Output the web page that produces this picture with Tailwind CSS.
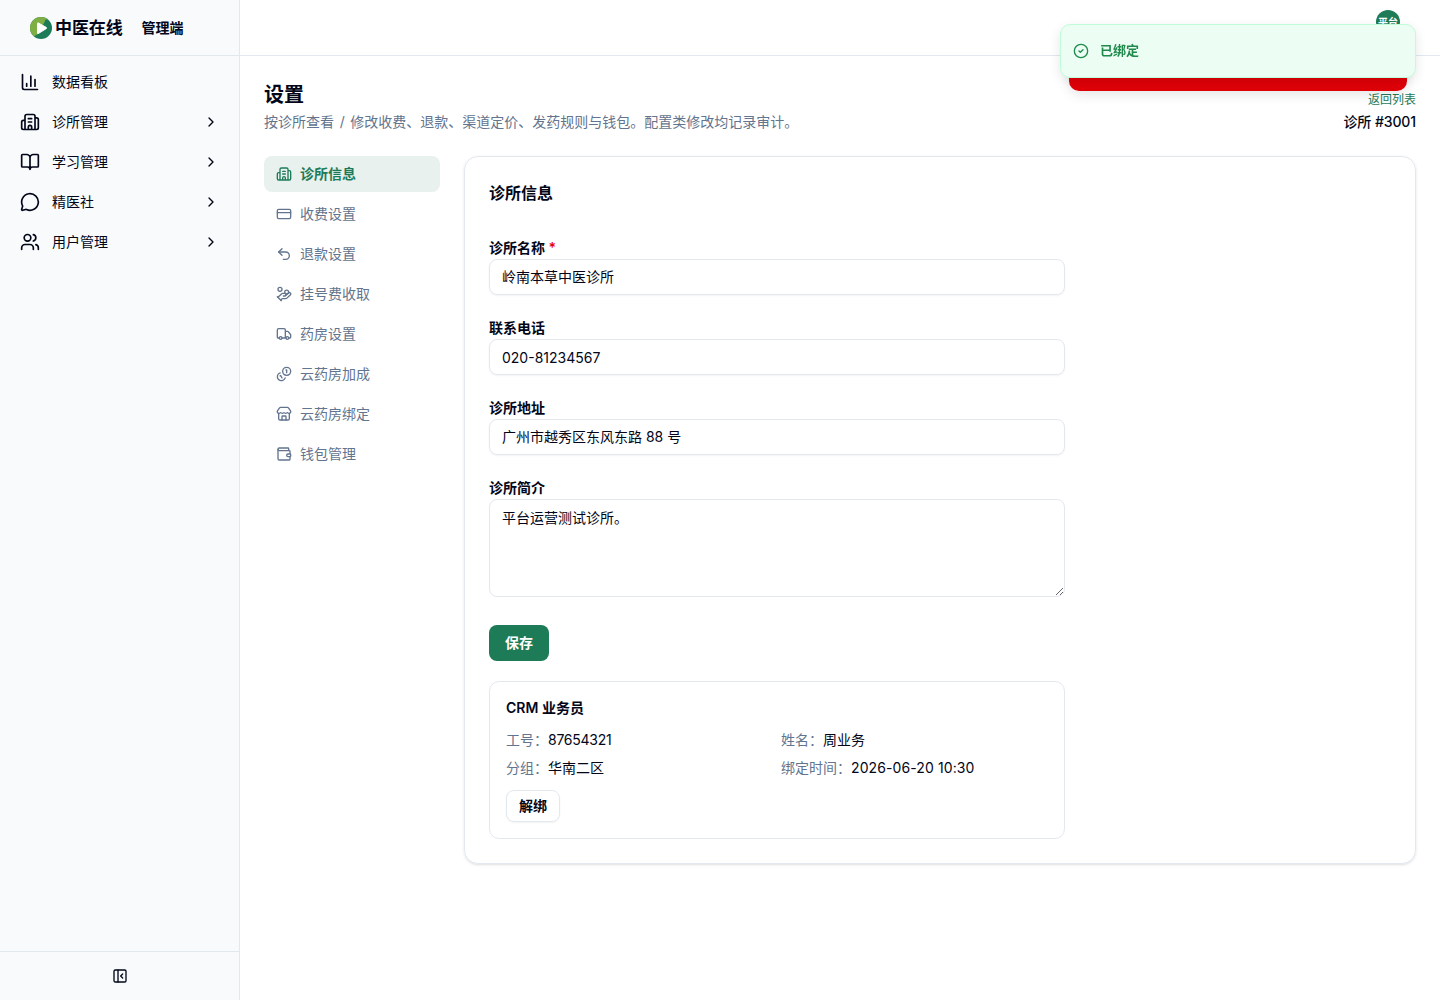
<!DOCTYPE html>
<html lang="zh-CN">
<head>
  <meta charset="UTF-8">
  <title>设置 - 中医在线 管理端</title>
  <script src="https://cdn.jsdelivr.net/npm/@tailwindcss/browser@4"></script>
</head>
<body class="h-screen overflow-hidden flex bg-white text-sm text-[#020618] font-['Inter','Noto_Sans_CJK_SC',sans-serif]">

  <!-- Icon sprite -->
  <svg class="hidden">
    <symbol id="chart" viewBox="0 0 24 24"><path d="M3 3v16a2 2 0 0 0 2 2h16M18 17V9M13 17V5M8 17v-3"/></symbol>
    <symbol id="building" viewBox="0 0 24 24"><path d="M10 12h4M10 8h4M14 21v-3a2 2 0 0 0-4 0v3M6 10H4a2 2 0 0 0-2 2v7a2 2 0 0 0 2 2h16a2 2 0 0 0 2-2V9a2 2 0 0 0-2-2h-2M6 21V5a2 2 0 0 1 2-2h8a2 2 0 0 1 2 2v16"/></symbol>
    <symbol id="book" viewBox="0 0 24 24"><path d="M12 7v14M3 18a1 1 0 0 1-1-1V4a1 1 0 0 1 1-1h5a4 4 0 0 1 4 4 4 4 0 0 1 4-4h5a1 1 0 0 1 1 1v13a1 1 0 0 1-1 1h-6a3 3 0 0 0-3 3 3 3 0 0 0-3-3z"/></symbol>
    <symbol id="message" viewBox="0 0 24 24"><path d="M2.992 16.342a2 2 0 0 1 .094 1.167l-1.065 3.29a1 1 0 0 0 1.236 1.168l3.413-.998a2 2 0 0 1 1.099.092 10 10 0 1 0-4.777-4.719"/></symbol>
    <symbol id="users" viewBox="0 0 24 24"><path d="M16 21v-2a4 4 0 0 0-4-4H6a4 4 0 0 0-4 4v2M16 3.128a4 4 0 0 1 0 7.744M22 21v-2a4 4 0 0 0-3-3.87"/><circle cx="9" cy="7" r="4"/></symbol>
    <symbol id="chevron" viewBox="0 0 24 24"><path d="m9 18 6-6-6-6"/></symbol>
    <symbol id="card" viewBox="0 0 24 24"><rect width="20" height="14" x="2" y="5" rx="2"/><path d="M2 10h20"/></symbol>
    <symbol id="undo" viewBox="0 0 24 24"><path d="M9 14 4 9l5-5"/><path d="M4 9h10.5a5.5 5.5 0 0 1 5.5 5.5 5.5 5.5 0 0 1-5.5 5.5H11"/></symbol>
    <symbol id="hand" viewBox="0 0 24 24"><path d="M11 15h2a2 2 0 1 0 0-4h-3c-.6 0-1.1.2-1.4.6L3 17"/><path d="m7 21 1.6-1.4c.3-.4.8-.6 1.4-.6h4c1.1 0 2.1-.4 2.8-1.2l4.6-4.4a2 2 0 0 0-2.75-2.91l-4.2 3.9"/><path d="m2 16 6 6"/><circle cx="16" cy="9" r="2.9"/><circle cx="6" cy="5" r="3"/></symbol>
    <symbol id="truck" viewBox="0 0 24 24"><path d="M14 18V6a2 2 0 0 0-2-2H4a2 2 0 0 0-2 2v11a1 1 0 0 0 1 1h2M15 18H9M19 18h2a1 1 0 0 0 1-1v-3.65a1 1 0 0 0-.22-.624l-3.48-4.35A1 1 0 0 0 17.52 8H14"/><circle cx="17" cy="18" r="2"/><circle cx="7" cy="18" r="2"/></symbol>
    <symbol id="coins" viewBox="0 0 24 24"><path d="M13.744 17.736a6 6 0 1 1-7.48-7.48M15 6h1v4"/><path d="m6.134 14.768.866-.5 2 3.464"/><circle cx="16" cy="8" r="6"/></symbol>
    <symbol id="store" viewBox="0 0 24 24"><path d="M15 21v-5a1 1 0 0 0-1-1h-4a1 1 0 0 0-1 1v5"/><path d="M17.774 10.31a1.12 1.12 0 0 0-1.549 0 2.5 2.5 0 0 1-3.451 0 1.12 1.12 0 0 0-1.548 0 2.5 2.5 0 0 1-3.452 0 1.12 1.12 0 0 0-1.549 0 2.5 2.5 0 0 1-3.77-3.248l2.889-4.184A2 2 0 0 1 7 2h10a2 2 0 0 1 1.653.873l2.895 4.192a2.5 2.5 0 0 1-3.774 3.244"/><path d="M4 10.95V19a2 2 0 0 0 2 2h12a2 2 0 0 0 2-2v-8.05"/></symbol>
    <symbol id="wallet" viewBox="0 0 24 24"><path d="M19 7V4a1 1 0 0 0-1-1H5a2 2 0 0 0 0 4h15a1 1 0 0 1 1 1v4h-3a2 2 0 0 0 0 4h3a1 1 0 0 0 1-1v-2a1 1 0 0 0-1-1"/><path d="M3 5v14a2 2 0 0 0 2 2h15a1 1 0 0 0 1-1v-4"/></symbol>
    <symbol id="panel" viewBox="0 0 24 24"><rect width="18" height="18" x="3" y="3" rx="2"/><path d="M9 3v18M16 15l-3-3 3-3"/></symbol>
    <symbol id="check" viewBox="0 0 24 24"><circle cx="12" cy="12" r="10"/><path d="m9 12 2 2 4-4"/></symbol>
  </svg>

  <!-- Sidebar -->
  <aside class="w-60 shrink-0 flex flex-col bg-[#f8fafc] border-r border-[#e2e8f0]">
    <div class="h-14 shrink-0 flex items-center pl-[30px] border-b border-[#e2e8f0]">
      <svg class="size-[22px] shrink-0" viewBox="0 0 22 22">
        <clipPath id="disc"><circle cx="11" cy="11" r="11"/></clipPath>
        <g clip-path="url(#disc)">
          <path d="M0 0h22v22H0z" fill="#1e7b58"/>
          <path d="M0 0H18V2.500Q15 1.500 14.500 5L8 17Q6 18 3.500 19.500L0 22Z" fill="#7fae45"/>
        </g>
        <path d="M7.500 6.500v9.500q0 1 .9.500l8-5q.7-.5 0-1l-8-4.500q-.9-.5-.9.500Z" fill="#fff" stroke="#fff"/>
      </svg>
      <span class="ml-[3px] pt-0.5 text-[17px] font-semibold tracking-[-0.1px]">中医在线</span>
      <span class="ml-[19px] font-semibold">管理端</span>
    </div>
    <nav class="flex-1 flex flex-col gap-1 px-2 pt-2">
      <a class="h-9 flex items-center gap-3 px-3">
        <svg class="size-5 fill-none stroke-current stroke-2 [stroke-linecap:round] [stroke-linejoin:round]"><use href="#chart"/></svg>
        <span>数据看板</span>
      </a>
      <a class="h-9 flex items-center gap-3 px-3">
        <svg class="size-5 fill-none stroke-current stroke-2 [stroke-linecap:round] [stroke-linejoin:round]"><use href="#building"/></svg>
        <span class="flex-1">诊所管理</span>
        <svg class="size-4 fill-none stroke-current stroke-2 [stroke-linecap:round] [stroke-linejoin:round]"><use href="#chevron"/></svg>
      </a>
      <a class="h-9 flex items-center gap-3 px-3">
        <svg class="size-5 fill-none stroke-current stroke-2 [stroke-linecap:round] [stroke-linejoin:round]"><use href="#book"/></svg>
        <span class="flex-1">学习管理</span>
        <svg class="size-4 fill-none stroke-current stroke-2 [stroke-linecap:round] [stroke-linejoin:round]"><use href="#chevron"/></svg>
      </a>
      <a class="h-9 flex items-center gap-3 px-3">
        <svg class="size-5 fill-none stroke-current stroke-2 [stroke-linecap:round] [stroke-linejoin:round]"><use href="#message"/></svg>
        <span class="flex-1">精医社</span>
        <svg class="size-4 fill-none stroke-current stroke-2 [stroke-linecap:round] [stroke-linejoin:round]"><use href="#chevron"/></svg>
      </a>
      <a class="h-9 flex items-center gap-3 px-3">
        <svg class="size-5 fill-none stroke-current stroke-2 [stroke-linecap:round] [stroke-linejoin:round]"><use href="#users"/></svg>
        <span class="flex-1">用户管理</span>
        <svg class="size-4 fill-none stroke-current stroke-2 [stroke-linecap:round] [stroke-linejoin:round]"><use href="#chevron"/></svg>
      </a>
    </nav>
    <div class="h-[49px] flex items-center justify-center border-t border-[#e2e8f0]">
      <svg class="size-4 fill-none stroke-current stroke-2 [stroke-linecap:round] [stroke-linejoin:round]"><use href="#panel"/></svg>
    </div>
  </aside>

  <div class="flex-1 min-w-0">
    <header class="h-14 flex justify-end pt-2.5 pr-10 border-b border-[#e2e8f0]">
      <div class="size-6 rounded-full bg-[#1e7b58] text-white text-[10px] font-semibold flex items-center justify-center">平台</div>
    </header>

    <main class="p-6">
      <div class="flex justify-between items-end">
        <div>
          <h1 class="pt-px -mb-px text-xl leading-7 font-semibold">设置</h1>
          <p class="mt-1 text-[#62748e] [word-spacing:1.7px]">按诊所查看 / 修改收费、退款、渠道定价、发药规则与钱包。配置类修改均记录审计。</p>
        </div>
        <div class="text-right">
          <a class="block text-xs text-[#1e7b58]">返回列表</a>
          <p class="mt-1 font-medium tracking-[-0.1px]">诊所 #3001</p>
        </div>
      </div>

      <div class="mt-6 flex items-start gap-6">
        <!-- Settings menu -->
        <nav class="w-44 shrink-0 flex flex-col gap-1 text-[#62748e]">
          <a class="h-9 flex items-center gap-2 px-3 rounded-lg bg-[#e8f1ee] text-[#1e7b58] font-semibold">
            <svg class="size-4 fill-none stroke-current stroke-2 [stroke-linecap:round] [stroke-linejoin:round]"><use href="#building"/></svg>诊所信息
          </a>
          <a class="h-9 flex items-center gap-2 px-3">
            <svg class="size-4 fill-none stroke-current stroke-2 [stroke-linecap:round] [stroke-linejoin:round]"><use href="#card"/></svg>收费设置
          </a>
          <a class="h-9 flex items-center gap-2 px-3">
            <svg class="size-4 fill-none stroke-current stroke-2 [stroke-linecap:round] [stroke-linejoin:round]"><use href="#undo"/></svg>退款设置
          </a>
          <a class="h-9 flex items-center gap-2 px-3">
            <svg class="size-4 fill-none stroke-current stroke-2 [stroke-linecap:round] [stroke-linejoin:round]"><use href="#hand"/></svg>挂号费收取
          </a>
          <a class="h-9 flex items-center gap-2 px-3">
            <svg class="size-4 fill-none stroke-current stroke-2 [stroke-linecap:round] [stroke-linejoin:round]"><use href="#truck"/></svg>药房设置
          </a>
          <a class="h-9 flex items-center gap-2 px-3">
            <svg class="size-4 fill-none stroke-current stroke-2 [stroke-linecap:round] [stroke-linejoin:round]"><use href="#coins"/></svg>云药房加成
          </a>
          <a class="h-9 flex items-center gap-2 px-3">
            <svg class="size-4 fill-none stroke-current stroke-2 [stroke-linecap:round] [stroke-linejoin:round]"><use href="#store"/></svg>云药房绑定
          </a>
          <a class="h-9 flex items-center gap-2 px-3">
            <svg class="size-4 fill-none stroke-current stroke-2 [stroke-linecap:round] [stroke-linejoin:round]"><use href="#wallet"/></svg>钱包管理
          </a>
        </nav>

        <!-- Clinic info -->
        <section class="flex-1 h-[708px] p-6 border border-[#e2e8f0] rounded-[14px] shadow-sm">
          <h2 class="text-base font-semibold">诊所信息</h2>
          <form class="mt-[34px] w-xl">
            <div class="flex flex-col gap-6">
              <div>
                <label class="block h-5 -mt-px mb-px font-semibold">诊所名称 <span class="text-[#e7000b]">*</span></label>
                <input type="text" value="岭南本草中医诊所" class="block w-full h-9 px-3 pb-0.5 border border-[#e2e8f0] rounded-lg shadow-xs">
              </div>
              <div>
                <label class="block h-5 -mt-px mb-px font-semibold">联系电话</label>
                <input type="text" value="020-81234567" class="block w-full h-9 px-3 border border-[#e2e8f0] rounded-lg shadow-xs">
              </div>
              <div>
                <label class="block h-5 -mt-px mb-px font-semibold">诊所地址</label>
                <input type="text" value="广州市越秀区东风东路 88 号" class="block w-full h-9 px-3 pb-0.5 border border-[#e2e8f0] rounded-lg shadow-xs">
              </div>
              <div>
                <label class="block h-5 -mt-px mb-px font-semibold">诊所简介</label>
                <textarea class="block w-full h-[98px] px-3 py-2 border border-[#e2e8f0] rounded-lg">平台运营测试诊所。</textarea>
              </div>
            </div>
            <button type="button" class="mt-7 block h-9 px-4 rounded-lg bg-[#1e7b58] text-white font-semibold">保存</button>
          </form>

          <div class="mt-5 w-xl p-4 border border-[#e2e8f0] rounded-[10px]">
            <h3 class="font-semibold">CRM 业务员</h3>
            <div class="mt-3 grid grid-cols-2 gap-2">
              <div><span class="text-[#62748e]">工号：</span><span class="tracking-[-0.25px]">87654321</span></div>
              <div><span class="text-[#62748e]">姓名：</span>周业务</div>
              <div><span class="text-[#62748e]">分组：</span>华南二区</div>
              <div><span class="text-[#62748e]">绑定时间：</span><span class="tracking-[0.1px]">2026-06-20 10:30</span></div>
            </div>
            <button type="button" class="mt-3 block h-8 px-3 border border-[#e2e8f0] rounded-lg shadow-xs font-semibold">解绑</button>
          </div>
        </section>
      </div>
    </main>
  </div>

  <!-- Toasts -->
  <div class="fixed top-6 right-6 w-[356px]">
    <div class="absolute left-[9px] right-[9px] top-5 h-[47px] rounded-[10px] bg-[#e00008] shadow-[0_4px_12px_rgba(0,0,0,0.1)]"></div>
    <div class="relative h-[54px] flex items-center gap-[11px] px-3 rounded-[10px] border border-[#bffcd9] bg-[#ecfdf3] text-[#208a4d] text-[13px] font-semibold shadow-[0_4px_12px_rgba(0,0,0,0.1)]">
      <svg class="size-4 fill-none stroke-current stroke-2 [stroke-linecap:round] [stroke-linejoin:round]"><use href="#check"/></svg>
      <span class="pb-0.5">已绑定</span>
    </div>
  </div>
</body>
</html>
